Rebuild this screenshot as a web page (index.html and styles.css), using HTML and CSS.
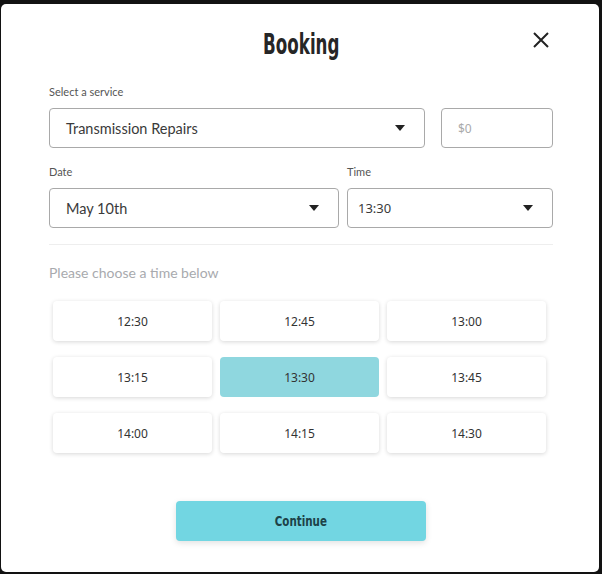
FILE: index.html
```html
<!DOCTYPE html>
<html>
<head>
<meta charset="utf-8">
<link rel="stylesheet" href="styles.css">
</head>
<body>
<div class="modal">
  <header class="head">
    <h1 class="title">Booking</h1>
    <button class="close" aria-label="Close">
      <svg width="18" height="18" viewBox="0 0 18 18"><path d="M2 2L16 16M16 2L2 16" stroke="#222" stroke-width="2" fill="none"/></svg>
    </button>
  </header>
  <div class="row">
    <div class="field grow">
      <label class="label">Select a service</label>
      <div class="select">Transmission Repairs<span class="caret"></span></div>
    </div>
    <div class="field price">
      <div class="input">$0</div>
    </div>
  </div>
  <div class="row row2">
    <div class="field date">
      <label class="label">Date</label>
      <div class="select">May 10th<span class="caret"></span></div>
    </div>
    <div class="field grow">
      <label class="label">Time</label>
      <div class="select time">13:30<span class="caret"></span></div>
    </div>
  </div>
  <hr class="rule">
  <p class="hint">Please choose a time below</p>
  <div class="grid">
    <button class="slot">12:30</button>
    <button class="slot">12:45</button>
    <button class="slot">13:00</button>
    <button class="slot">13:15</button>
    <button class="slot active">13:30</button>
    <button class="slot">13:45</button>
    <button class="slot">14:00</button>
    <button class="slot">14:15</button>
    <button class="slot">14:30</button>
  </div>
  <div class="foot">
    <button class="continue"><span class="continue-text">Continue</span></button>
  </div>
</div>
</body>
</html>
```
FILE: styles.css
```css
html, body {
  margin: 0;
  padding: 0;
  background: #121212;
  width: 602px;
  height: 574px;
  overflow: hidden;
}
.modal {
  box-sizing: border-box;
  margin: 4px 0 0 1px;
  width: 598px;
  height: 568px;
  background: #fff;
  border-radius: 5px;
  padding: 0 46px 0 48px;
  font-family: Lato, "Open Sans", sans-serif;
  color: #333;
}
.head {
  height: 82px;
  display: flex;
  align-items: center;
  justify-content: center;
  position: relative;
}
.title {
  margin: 0;
  font-family: "DejaVu Sans Condensed", sans-serif;
  font-stretch: condensed;
  font-weight: 700;
  font-size: 29px;
  color: #262626;
  padding-left: 2px;
  transform: scaleX(0.64);
  margin-top: -2px;
}
.close {
  position: absolute;
  right: 0;
  top: 24px;
  border: 0;
  background: none;
  padding: 0;
  width: 24px;
  height: 24px;
  display: flex;
  align-items: center;
  justify-content: center;
}
.row {
  display: flex;
  gap: 16px;
  align-items: flex-end;
}
.row2 {
  margin-top: 18px;
  gap: 8px;
}
.field {
  display: flex;
  flex-direction: column;
}
.grow { flex: 1; }
.price { width: 112px; }
.date { width: 290px; }
.label {
  font-size: 11px;
  color: #555;
  margin-bottom: 10px;
  line-height: 12px;
}
.select, .input {
  box-sizing: border-box;
  height: 40px;
  border: 1px solid #a9a9a9;
  border-radius: 4px;
  display: flex;
  align-items: center;
  padding: 0 19px 0 16px;
  font-size: 14.5px;
  color: #3a3a3a;
  justify-content: space-between;
}
.select.time { padding-left: 10px; font-family: "Noto Sans", sans-serif; font-size: 13px; }
.input {
  color: #aaa;
  font-size: 12px;
  font-family: "Noto Sans", sans-serif;
}
.caret {
  width: 0;
  height: 0;
  border-left: 5px solid transparent;
  border-right: 5px solid transparent;
  border-top: 6px solid #222;
}
.rule {
  border: 0;
  border-top: 1px solid #eee;
  margin: 16px 0 0 0;
}
.hint {
  margin: 19px 0 0 0;
  font-size: 14px;
  color: #a8aaae;
  line-height: 17px;
}
.grid {
  margin: 20px 6px 0 4px;
  display: grid;
  grid-template-columns: repeat(3, 159px);
  column-gap: 8px;
  row-gap: 16px;
}
.slot {
  height: 40px;
  border: 0;
  border-radius: 4px;
  background: #fff;
  box-shadow: 0 1px 4px rgba(0,0,0,0.16);
  font-family: "Noto Sans", sans-serif;
  font-size: 12px;
  color: #333;
}
.slot.active {
  background: #8fd7df;
  box-shadow: none;
}
.foot {
  display: flex;
  justify-content: center;
  margin-top: 48px;
}
.continue {
  width: 250px;
  height: 40px;
  border: 0;
  border-radius: 4px;
  background: #72d6e2;
  box-shadow: 0 2px 6px rgba(0,0,0,0.12);
  font-family: "DejaVu Sans Condensed", sans-serif;
  font-stretch: condensed;
  font-weight: 700;
  font-size: 14px;
  color: #1d4248;
}
.continue-text {
  display: inline-block;
  transform: scaleX(0.82);
}
```
